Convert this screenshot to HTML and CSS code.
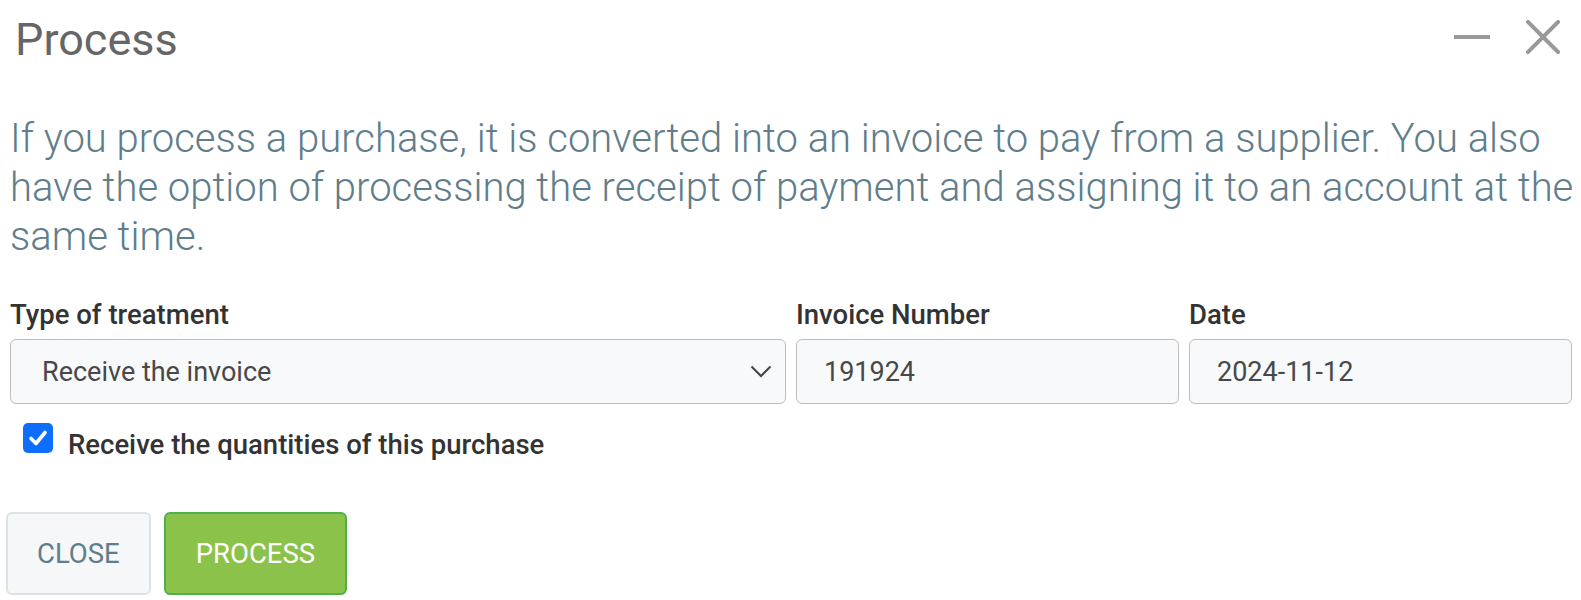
FILE: index.html
```html
<!DOCTYPE html>
<html>
<head>
<meta charset="utf-8">
<link rel="stylesheet" href="styles.css">
</head>
<body>
<div class="dialog">
  <div class="header">
    <h1 class="title">Process</h1>
    <div class="controls">
      <span class="ctl ctl-min" aria-label="minimize"><svg width="36" height="4" viewBox="0 0 36 4"><rect x="0" y="0" width="36" height="4" fill="#999"/></svg></span>
      <span class="ctl ctl-close" aria-label="close"><svg width="34" height="34" viewBox="0 0 34 34"><path d="M2 2 L32 32 M32 2 L2 32" stroke="#999" stroke-width="4" stroke-linecap="square"/></svg></span>
    </div>
  </div>
  <p class="desc">If you process a purchase, it is converted into an invoice to pay from a supplier. You also have the option of processing the receipt of payment and assigning it to an account at the same time.</p>
  <div class="fields">
    <div class="field">
      <label class="lbl">Type of treatment</label>
      <div class="input select">
        <span>Receive the invoice</span>
        <svg class="chev" width="22" height="13" viewBox="0 0 22 13"><path d="M1.5 1.5 L11 11 L20.5 1.5" fill="none" stroke="#444" stroke-width="2"/></svg>
      </div>
    </div>
    <div class="field">
      <label class="lbl">Invoice Number</label>
      <div class="input">191924</div>
    </div>
    <div class="field">
      <label class="lbl">Date</label>
      <div class="input">2024-11-12</div>
    </div>
  </div>
  <div class="check-row">
    <span class="checkbox"><svg width="30" height="30" viewBox="0 0 30 30"><path d="M8 15.5 L13 20.5 L22 9.5" fill="none" stroke="#fff" stroke-width="3.6" stroke-linecap="round" stroke-linejoin="round"/></svg></span>
    <span class="check-label">Receive the quantities of this purchase</span>
  </div>
  <div class="buttons">
    <button class="btn btn-close">CLOSE</button>
    <button class="btn btn-process">PROCESS</button>
  </div>
</div>
</body>
</html>
```
FILE: styles.css
```css
* { box-sizing: border-box; }
html, body { margin: 0; padding: 0; background: #fff; }
body { font-family: Roboto, "Liberation Sans", sans-serif; }
.dialog { padding: 0 4px 0 5px; }
.header {
  display: flex;
  justify-content: space-between;
  align-items: flex-start;
  height: 92px;
}
.title {
  margin: 0;
  padding: 14px 0 0 10px;
  font-weight: 400;
  font-size: 45px;
  line-height: 52px;
  color: #666;
}
.controls {
  display: flex;
  align-items: center;
  gap: 36px;
  padding: 19px 17px 0 0;
  height: 54px;
}
.ctl { display: flex; align-items: center; }
.ctl svg { display: block; }
.desc {
  margin: 22px 0 0;
  padding: 0 0 0 5px;
  font-size: 40px;
  font-weight: 300;
  line-height: 49px;
  color: #607d8b;
}
.fields {
  display: grid;
  grid-template-columns: 2fr 1fr 1fr;
  margin-top: 37px;
}
.field { padding: 0 5px; display: flex; flex-direction: column; }
.lbl {
  font-size: 27.5px;
  font-weight: 500;
  color: #333;
  line-height: 33px;
  margin-bottom: 8px;
}
.input {
  height: 65px;
  border: 1.5px solid #bdbdbd;
  border-radius: 6px;
  background: #f8f9fa;
  padding: 0 27px;
  display: flex;
  align-items: center;
  font-size: 27px;
  color: #484848;
}
.select { justify-content: space-between; padding: 0 13px 0 31px; }
.chev { display: block; }
.check-row {
  display: flex;
  align-items: flex-start;
  gap: 15px;
  padding: 19px 0 0 18px;
}
.checkbox {
  width: 30px;
  height: 30px;
  border-radius: 5px;
  background: #0d6efd;
  display: flex;
  flex: none;
}
.check-label {
  font-size: 27.5px;
  font-weight: 500;
  color: #333;
  line-height: 33px;
  padding-top: 5px;
}
.buttons {
  display: flex;
  gap: 13px;
  margin-top: 51px;
  padding-left: 1px;
}
.btn {
  height: 83px;
  border-radius: 6px;
  font-family: Roboto, "Liberation Sans", sans-serif;
  font-size: 27.5px;
  padding: 0 29px;
  cursor: pointer;
}
.btn-close {
  background: #f5f7f9;
  border: 2px solid #dce3e6;
  color: #607d8b;
}
.btn-process {
  background: #8bc34a;
  border: 2px solid #4caf50;
  color: #fff;
  padding: 0 30px;
}
```
